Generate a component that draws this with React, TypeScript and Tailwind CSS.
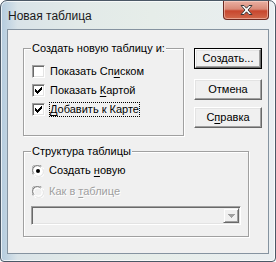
import React from "react";

const sunken =
  "border border-t-[#a0a0a0] border-l-[#a0a0a0] border-b-white border-r-white shadow-[inset_1px_1px_0_#696969,inset_-1px_-1px_0_#e3e3e3]";

function Btn({ children, def }: { children: React.ReactNode; def?: boolean }) {
  const inner = (
    <div className="flex h-full w-full items-center justify-center border border-t-white border-l-white border-b-[#696969] border-r-[#696969] bg-[#f0f0f0] shadow-[inset_-1px_-1px_0_#a0a0a0,inset_1px_1px_0_#e3e3e3]">
      <span className={def ? "pb-[1px]" : "pb-[1px]"}>{children}</span>
    </div>
  );
  if (def)
    return <div className="h-[21px] w-[68px] border border-black">{inner}</div>;
  return <div className="h-[21px] w-[68px]">{inner}</div>;
}

function Check({ checked }: { checked?: boolean }) {
  return (
    <div className={`h-[13px] w-[13px] shrink-0 bg-white ${sunken} flex items-center justify-center`}>
      {checked && (
        <svg width="7" height="7" viewBox="0 0 7 7" shapeRendering="crispEdges">
          <path d="M0 2h1v1h-1zM0 3h2v1h-2zM0 4h3v1h-3zM1 5h2v1h-2zM2 6h1v1h-1zM3 3h1v3h-1zM4 2h1v3h-1zM5 1h1v3h-1zM6 0h1v3h-1z" fill="#000" />
        </svg>
      )}
    </div>
  );
}

function Radio({ on, disabled }: { on?: boolean; disabled?: boolean }) {
  return (
    <svg width="12" height="12" viewBox="0 0 12 12" className="shrink-0">
      <circle cx="6" cy="6" r="5.5" fill="#fff" />
      <path d="M1.1 9.5A5.5 5.5 0 0 1 9.5 1.1" stroke="#a0a0a0" strokeWidth="1" fill="none" />
      <path d="M2 8.7A4.5 4.5 0 0 1 8.7 2" stroke="#696969" strokeWidth="1" fill="none" />
      <path d="M10.9 2.5A5.5 5.5 0 0 1 2.5 10.9" stroke="#ffffff" strokeWidth="1" fill="none" />
      <path d="M10 3.3A4.5 4.5 0 0 1 3.3 10" stroke="#e3e3e3" strokeWidth="1" fill="none" />
      <circle cx="6" cy="6" r="3.6" fill={disabled ? "#f0f0f0" : "#fff"} />
      {on && <circle cx="6" cy="6" r="2" fill="#000" />}
    </svg>
  );
}

function U({ children }: { children: React.ReactNode }) {
  return <span className="underline underline-offset-[2px]">{children}</span>;
}

export default function App() {
  return (
    <div className="h-[262px] w-[276px] font-['Liberation_Sans',sans-serif] text-[11px] leading-[13px] text-black">
      <div className="flex h-full w-full flex-col rounded-t-[7px] rounded-b-[4px] border border-[#4b5866] bg-[linear-gradient(90deg,#b3cbde_0%,#d9e3e8_6%,#e2eae8_30%,#e6ede9_55%,#e9eef1_100%)] shadow-[inset_0_0_0_1px_rgba(255,255,255,0.7)]">
        {/* title bar */}
        <div className="flex h-[28px] shrink-0 items-start justify-between">
          <span className="ml-[7px] mt-[8px] font-['Liberation_Sans',sans-serif] text-[12px] leading-[14px] text-[#1a1a1a]">
            Новая таблица
          </span>
          <div className="mr-[6px] flex h-[19px] w-[46px] items-center justify-center rounded-b-[4px] border border-t-0 border-[#6e2a22] bg-[linear-gradient(180deg,#eab0a2_0%,#d98a78_45%,#c7462e_55%,#d2694c_100%)] shadow-[inset_0_0_0_1px_rgba(255,220,210,0.5)]">
            <svg width="15" height="12" viewBox="0 0 15 12">
              <path
                d="M2 1.5h3l2.5 2.7 2.5-2.7h3l-4 4.5 4 4.5h-3l-2.5-2.7-2.5 2.7h-3l4-4.5z"
                fill="#fff"
                stroke="#3a3a3a"
                strokeWidth="1"
                strokeLinejoin="round"
              />
            </svg>
          </div>
        </div>
        {/* client area */}
        <div className="mx-[6px] mb-[7px] flex-1 border border-[#8593a0] bg-[#f0f0f0] pl-[15px] pt-[18px]">
          <div className="flex items-start">
            {/* group 1 */}
            <div className="w-[161px] border border-[#a0a0a0] pb-[16px] shadow-[1px_1px_0_#fff,inset_1px_1px_0_#fff]">
              <div className="-mt-[7px] ml-[7px] w-fit bg-[#f0f0f0] px-[1px]">Создать новую таблицу и:</div>
              <div className="mt-[7px] flex flex-col pl-[8px]">
                <div className="flex h-[19px] items-center gap-[5px]">
                  <Check />
                  <span>
                    Показать Сп<U>и</U>ском
                  </span>
                </div>
                <div className="flex h-[19px] items-center gap-[5px]">
                  <Check checked />
                  <span>
                    Показать <U>К</U>артой
                  </span>
                </div>
                <div className="flex h-[19px] items-center gap-[4px]">
                  <Check checked />
                  <span className="border border-dotted border-black px-[0px]">
                    <U>Д</U>обавить к Карте
                  </span>
                </div>
              </div>
            </div>
            {/* buttons */}
            <div className="ml-[10px] flex flex-col">
              <Btn def>Создать...</Btn>
              <div className="mt-[10px]">
                <Btn>Отмена</Btn>
              </div>
              <div className="mt-[7px]">
                <Btn>
                  С<U>п</U>равка
                </Btn>
              </div>
            </div>
          </div>
          {/* group 2 */}
          <div className="mt-[15px] w-[226px] border border-[#a0a0a0] pb-[11px] shadow-[1px_1px_0_#fff,inset_1px_1px_0_#fff]">
            <div className="-mt-[7px] ml-[7px] w-fit bg-[#f0f0f0] px-[1px]">Структура таблицы</div>
            <div className="mt-[2px] flex flex-col pl-[8px]">
              <div className="flex h-[21px] items-center gap-[5px]">
                <Radio on />
                <span>
                  Создать <U>н</U>овую
                </span>
              </div>
              <div className="flex h-[21px] items-center gap-[5px]">
                <Radio disabled />
                <span className="text-[#a0a0a0] [text-shadow:1px_1px_0_#fff]">
                  Как в <U>т</U>аблице
                </span>
              </div>
            </div>
            <div className={`ml-[7px] mt-[4px] flex h-[19px] w-[210px] justify-end bg-[#f0f0f0] ${sunken}`}>
              <div className="m-[1px] ml-0 flex w-[16px] items-center justify-center border border-t-[#f0f0f0] border-l-[#f0f0f0] border-b-[#696969] border-r-[#696969] bg-[#f0f0f0] shadow-[inset_1px_1px_0_#fff,inset_-1px_-1px_0_#a0a0a0]">
                <svg width="7" height="4" viewBox="0 0 7 4" shapeRendering="crispEdges">
                  <path d="M0 0h7v1h-7zM1 1h5v1h-5zM2 2h3v1h-3zM3 3h1v1h-1z" fill="#a0a0a0" />
                </svg>
              </div>
            </div>
          </div>
        </div>
      </div>
    </div>
  );
}
